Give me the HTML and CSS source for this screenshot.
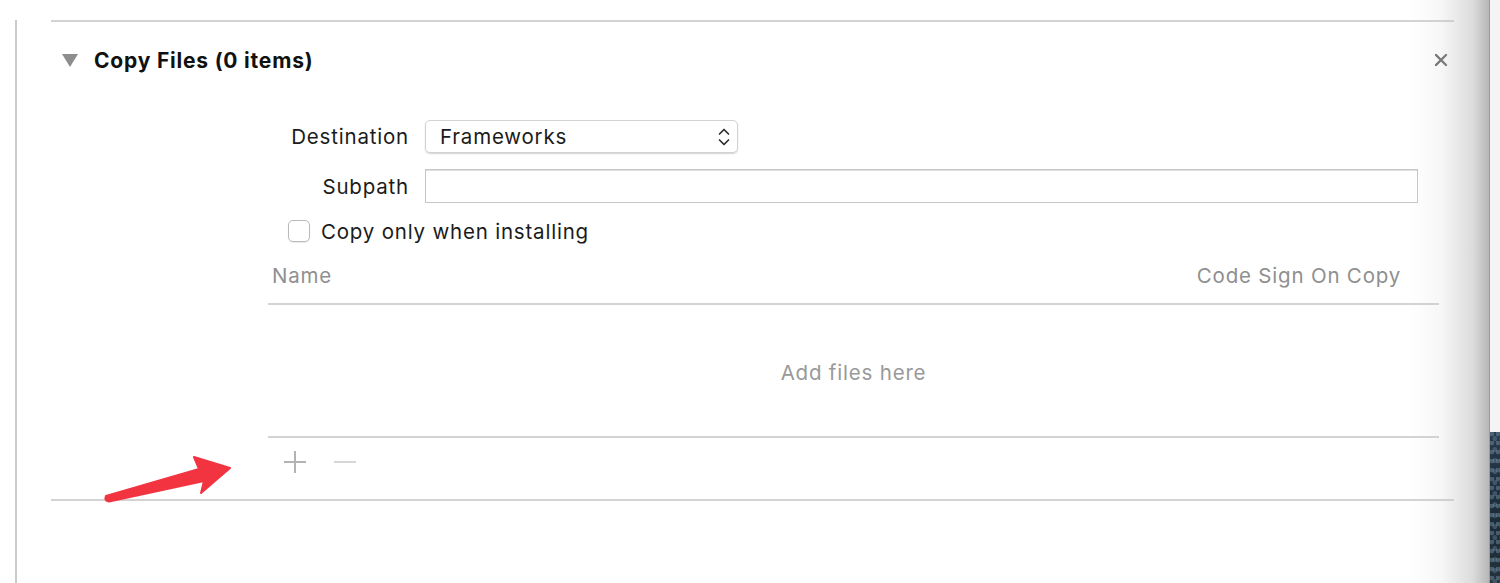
FILE: index.html
```html
<!DOCTYPE html>
<html>
<head>
<meta charset="utf-8">
<link rel="stylesheet" href="styles.css">
</head>
<body>
<div class="window">
  <div class="editor">
    <section class="phase">
      <header class="phase-head">
        <svg class="disclosure" width="16" height="13" viewBox="0 0 16 13"><polygon points="0,0 16,0 8,13" fill="#8d8d8d"/></svg>
        <h2 class="phase-title">Copy Files (0 items)</h2>
        <svg class="close" width="14" height="14" viewBox="0 0 14 14"><path d="M2 2 L12 12 M12 2 L2 12" stroke="#6a6a6a" stroke-width="2.4" stroke-linecap="round"/></svg>
      </header>
      <div class="form">
        <label class="label">Destination</label>
        <div class="popup">
          <span>Frameworks</span>
          <svg class="chev" width="14" height="22" viewBox="0 0 14 22"><path d="M2.5 8 L7 3.5 L11.5 8 M2.5 14 L7 18.5 L11.5 14" fill="none" stroke="#2e2e2e" stroke-width="1.7" stroke-linecap="round" stroke-linejoin="round"/></svg>
        </div>
        <label class="label">Subpath</label>
        <div class="field"></div>
      </div>
      <div class="check-row">
        <span class="checkbox"></span>
        <span class="check-label">Copy only when installing</span>
      </div>
      <div class="table">
        <div class="thead">
          <span>Name</span>
          <span>Code Sign On Copy</span>
        </div>
        <div class="tbody">Add files here</div>
      </div>
      <div class="tools">
        <svg width="24" height="24" viewBox="0 0 24 24"><path d="M12 1 V23 M1 12 H23" stroke="#b3b3b3" stroke-width="2"/></svg>
        <svg width="24" height="24" viewBox="0 0 24 24"><path d="M1 12 H23" stroke="#d6d6d6" stroke-width="2"/></svg>
      </div>
    </section>
  </div>
  <div class="edge-shade"></div>
  <svg class="annot" width="140" height="50" viewBox="0 0 140 50"><path d="M3 40 Q1 45 6 45.5 L101 25 L98 37 L127 12 L91 1 L96 13 Z" fill="#f23440" stroke="#f23440" stroke-width="2" stroke-linejoin="round"/></svg>
</div>
<div class="desktop">
  <div class="desk-top"></div>
  <div class="desk-wall"></div>
</div>
</body>
</html>
```
FILE: styles.css
```css
html, body {
  margin: 0;
  padding: 0;
}
body {
  width: 1500px;
  height: 583px;
  overflow: hidden;
  display: flex;
  background: #fff;
  font-family: "Inter", "Roboto", "Liberation Sans", sans-serif;
  color: #1b1b1b;
  letter-spacing: 0.8px;
}
.window {
  position: relative;
  flex: 0 0 1489px;
  height: 583px;
  background: #fff;
  border-right: 1px solid #9c9c9c;
}
.editor {
  margin-left: 15px;
  height: 583px;
  border-left: 2px solid #cbcbcb;
  padding-left: 34px;
  padding-right: 35px;
  box-sizing: border-box;
}
.phase {
  margin-top: 20px;
  height: 481px;
  box-sizing: border-box;
  border-top: 2px solid #d3d3d3;
  border-bottom: 2px solid #d3d3d3;
  display: flex;
  flex-direction: column;
}
.phase-head {
  display: flex;
  align-items: center;
  height: 32px;
  margin-top: 22px;
  padding-left: 11px;
  padding-right: 6px;
}
.disclosure {
  margin-right: 16px;
}
.phase-title {
  margin: 0;
  font-size: 21px;
  font-weight: 700;
  flex: 1;
  color: #111;
}
.form {
  display: grid;
  grid-template-columns: 358px 1fr;
  column-gap: 16px;
  row-gap: 16px;
  align-items: center;
  margin-top: 44px;
  padding-right: 36px;
}
.label {
  text-align: right;
  font-size: 20.5px;
}
.popup {
  width: 313px;
  height: 33px;
  box-sizing: border-box;
  border-radius: 5px;
  border: 1px solid #d2d2d2;
  box-shadow: 0 1px 1.5px rgba(0,0,0,0.18);
  display: flex;
  align-items: center;
  justify-content: space-between;
  padding: 0 6px 0 14px;
  font-size: 20.5px;
}
.chev {
  display: block;
}
.field {
  height: 34px;
  box-sizing: border-box;
  border: 1px solid #c6c6c6;
  box-shadow: inset 0 1px 0 #e0e0e0;
}
.check-row {
  display: flex;
  align-items: center;
  margin-top: 15px;
  margin-left: 237px;
  height: 26px;
}
.checkbox {
  width: 22px;
  height: 22px;
  box-sizing: border-box;
  border: 1px solid #b9b9b9;
  border-radius: 5px;
  box-shadow: 0 1px 1px rgba(0,0,0,0.08);
  margin-right: 11px;
}
.check-label {
  font-size: 20.5px;
}
.table {
  margin-left: 217px;
  margin-right: 15px;
  margin-top: 15px;
}
.thead {
  display: flex;
  justify-content: space-between;
  align-items: center;
  height: 32px;
  padding: 0 38px 12px 4px;
  color: #8f8f8f;
  font-size: 20.5px;
  border-bottom: 2px solid #d3d3d3;
}
.tbody {
  height: 133px;
  border-bottom: 2px solid #d3d3d3;
  display: flex;
  align-items: center;
  justify-content: center;
  color: #999;
  font-size: 20.5px;
  padding-top: 3px;
  box-sizing: border-box;
}
.tools {
  display: flex;
  align-items: center;
  gap: 26px;
  margin-left: 232px;
  margin-top: 12px;
}
.edge-shade {
  position: absolute;
  top: 0;
  right: 0;
  width: 80px;
  height: 583px;
  background: linear-gradient(to right, rgba(200,200,200,0) 0%, rgba(200,200,200,0.15) 40%, rgba(190,190,190,0.55) 80%, rgba(175,175,175,0.9) 100%);
  pointer-events: none;
}
.annot {
  position: absolute;
  left: 103px;
  top: 456px;
}
.desktop {
  flex: 1;
  display: flex;
  flex-direction: column;
}
.desk-top {
  height: 432px;
  background: #f4f4f4;
}
.desk-wall {
  flex: 1;
  background:
    radial-gradient(circle at 30% 20%, rgba(120,150,170,0.45) 0 2px, transparent 3px),
    radial-gradient(circle at 70% 60%, rgba(110,140,160,0.4) 0 2px, transparent 3px),
    linear-gradient(to bottom, #27394a, #1c2b38 60%, #24323d);
  background-size: 6px 9px, 7px 11px, 100% 100%;
}
```
